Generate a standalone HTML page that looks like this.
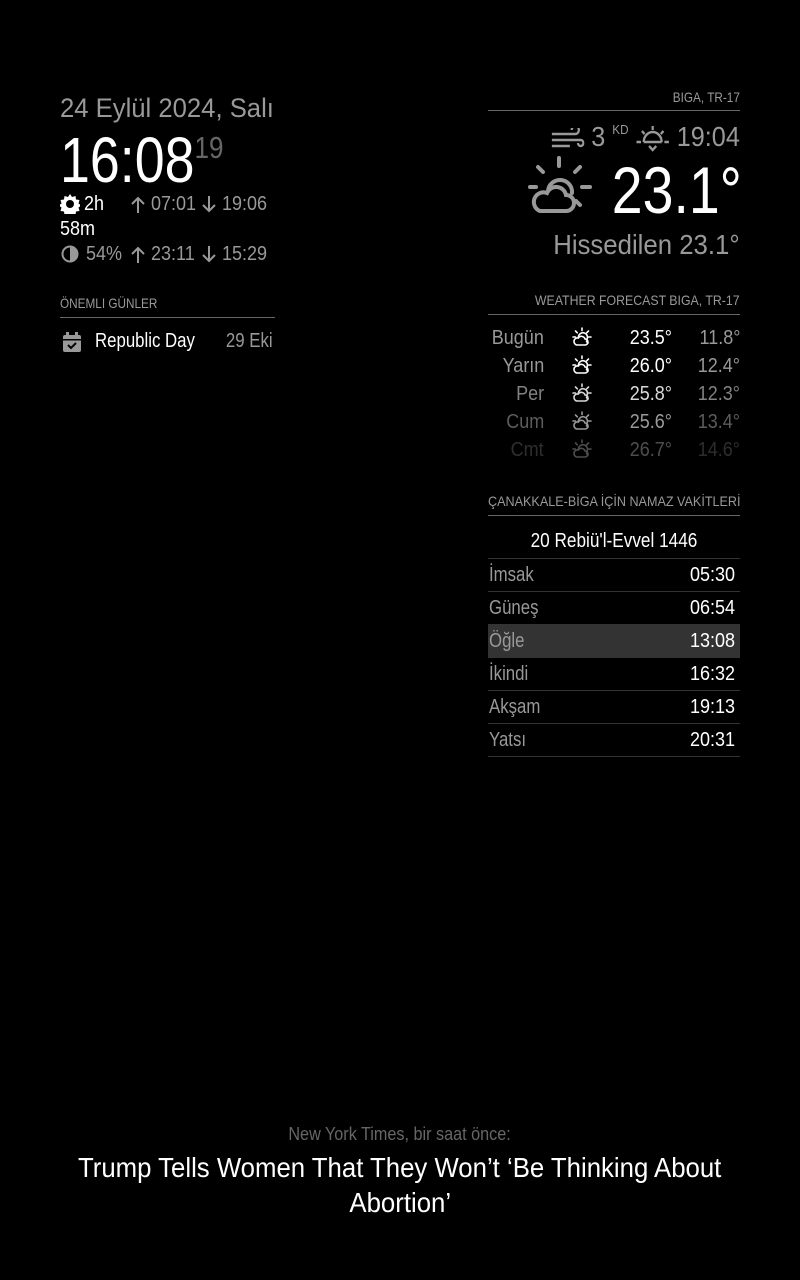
<!DOCTYPE html>
<html><head><meta charset="utf-8"><style>
body{margin:0;width:800px;height:1280px;background:#000;font-family:"Liberation Sans",sans-serif;color:#999;position:relative;overflow:hidden}
.a{position:absolute;white-space:nowrap;line-height:1}
.w{color:#fff}.d{color:#666}
.r{text-align:right}
.hl{position:absolute;height:1px;background:#666}
.cn{display:inline-block;transform:scaleX(.84);transform-origin:left center}
.cr{display:inline-block;transform:scaleX(.84);transform-origin:right center}
.cc{display:inline-block;transform:scaleX(.84);transform-origin:center center}
</style></head><body>
<svg width="0" height="0" style="position:absolute"><defs><g id="sc" stroke-width="1.6" fill="none" stroke-linecap="round"><path d="M10 1v2.5M3.5 4l1.8 1.8M16.5 4l-1.8 1.8M1 10h2.5M16.5 10h2.5M14.5 14.5l1.5 1.5"/><path d="M6.5 11a4.5 4.5 0 1 1 8 2"/><path d="M5 18h8a3 3 0 0 0 0-6 4 4 0 0 0-7-1 3.5 3.5 0 0 0-1 7z"/></g>
<g id="up" stroke="#999" stroke-width="2" fill="none"><path d="M7 18V3M1 9l6-6 6 6"/></g>
<g id="dn" stroke="#999" stroke-width="2" fill="none"><path d="M7 1v15M1 10l6 6 6-6"/></g></defs></svg>
<!-- left -->
<div class="a" style="left:60px;top:95px;font-size:27px"><span class="cn" style="transform:scaleX(.95)">24 Eylül 2024, Salı</span></div>
<div class="a w" style="left:60px;top:128px;font-size:64px;font-weight:300"><span class="cn">16:08<span class="d" style="font-size:31px;vertical-align:top;position:relative;top:4px">19</span></span></div>
<svg class="a" style="left:60px;top:194px" width="20" height="20" viewBox="0 0 20 20"><path d="M10 0l2 3 3.5-1 .5 3.5 3.5.5-1 3.5 3 2-3 2 1 3.5-3.5.5-.5 3.5-3.5-1-2 3-2-3-3.5 1-.5-3.5-3.5-.5 1-3.5-3-2 3-2-1-3.5 3.5-.5.5-3.5 3.5 1z" fill="#fff"/><circle cx="10" cy="10" r="4" fill="#000"/></svg>
<div class="a w" style="left:84px;top:194px;font-size:20px"><span class="cn" style="transform:scaleX(.9)">2h</span></div>
<svg class="a" style="left:131px;top:195px" width="14" height="19"><use href="#up"/></svg>
<div class="a" style="left:151px;top:194px;font-size:20px"><span class="cn" style="transform:scaleX(.9)">07:01</span></div>
<svg class="a" style="left:202px;top:195px" width="14" height="19"><use href="#dn"/></svg>
<div class="a" style="left:222px;top:194px;font-size:20px"><span class="cn" style="transform:scaleX(.9)">19:06</span></div>
<div class="a w" style="left:60px;top:219px;font-size:20px"><span class="cn" style="transform:scaleX(.9)">58m</span></div>
<svg class="a" style="left:61px;top:245px" width="18" height="18" viewBox="0 0 18 18"><circle cx="9" cy="9" r="7.5" fill="none" stroke="#999" stroke-width="2"/><path d="M9 1.5a7.5 7.5 0 0 1 0 15z" fill="#999"/></svg>
<div class="a" style="left:86px;top:244px;font-size:20px"><span class="cn" style="transform:scaleX(.9)">54%</span></div>
<svg class="a" style="left:131px;top:245px" width="14" height="19"><use href="#up"/></svg>
<div class="a" style="left:151px;top:244px;font-size:20px"><span class="cn" style="transform:scaleX(.9)">23:11</span></div>
<svg class="a" style="left:202px;top:245px" width="14" height="19"><use href="#dn"/></svg>
<div class="a" style="left:222px;top:244px;font-size:20px"><span class="cn" style="transform:scaleX(.9)">15:29</span></div>
<div class="a" style="left:60px;top:296px;font-size:14px"><span class="cn">ÖNEMLI GÜNLER</span></div>
<div class="hl" style="left:60px;top:317px;width:215px"></div>
<svg class="a" style="left:63px;top:332px" width="18" height="20" viewBox="0 0 18 20"><rect x="0" y="3" width="18" height="17" rx="2" fill="#999"/><rect x="3" y="0" width="3" height="5" fill="#999"/><rect x="12" y="0" width="3" height="5" fill="#999"/><rect x="0" y="7" width="18" height="1.5" fill="#000"/><path d="M5 13l3 3 5-5" stroke="#000" stroke-width="2" fill="none"/></svg>
<div class="a w" style="left:95px;top:331px;font-size:20px"><span class="cn">Republic Day</span></div>
<div class="a r" style="right:527px;top:331px;font-size:20px"><span class="cr">29 Eki</span></div>
<!-- right weather -->
<div class="a r" style="right:60px;top:90px;font-size:14px"><span class="cr">BIGA, TR-17</span></div>
<div class="hl" style="left:488px;top:110px;width:252px"></div>
<div class="a r" style="right:60px;top:123px;font-size:28px"><span class="cr" style="transform:scaleX(.9)"><svg width="38" height="22" viewBox="0 0 38 22" style="vertical-align:middle"><path d="M2 6h26a4 4 0 1 0-4-4M2 12h32a3 3 0 1 1-3 3M2 18h20" stroke="#999" stroke-width="2.5" fill="none"/></svg> 3 <span style="font-size:13px;vertical-align:top">KD</span> <svg width="38" height="30" viewBox="0 0 38 30" style="vertical-align:middle"><path d="M9 18a10 10 0 0 1 20 0M19 2v4M7 7l3 3M31 7l-3 3M1 18h5M32 18h5M9 18h20M15 22l4 4 4-4" stroke="#999" stroke-width="2.5" fill="none"/></svg> 19:04</span></div>
<svg class="a" style="left:528px;top:155px" width="64" height="60" viewBox="0 0 64 60"><g stroke="#999" stroke-width="4" fill="none" stroke-linecap="round"><path d="M31 3v8M10 12l5 5M52 12l-5 5M2 32h6M54 32h8M48 46l4 4"/><path d="M20 36a12 12 0 1 1 24 2"/><path d="M12 56h26a8 8 0 0 0 0-16 10 10 0 0 0-19-2 9 9 0 0 0-7 18z"/></g></svg>
<div class="a w r" style="right:58px;top:157px;font-size:66px;font-weight:300"><span class="cr">23.1°</span></div>
<div class="a r" style="right:60px;top:231px;font-size:28px"><span class="cr" style="transform:scaleX(.92)">Hissedilen 23.1°</span></div>
<div class="a r" style="right:60px;top:293px;font-size:14px"><span class="cr" style="transform:scaleX(.88)">WEATHER FORECAST BIGA, TR-17</span></div>
<div class="hl" style="left:488px;top:314px;width:252px"></div>
<div style="position:absolute;left:488px;top:324px;width:252px;font-size:20px">
<div style="position:relative;height:28px"><div class="a r" style="right:196px;top:4px"><span class="cr" style="transform:scaleX(.9)">Bugün</span></div><svg class="a" style="left:84px;top:3px;stroke:#fff" width="20" height="20"><use href="#sc"/></svg><div class="a w r" style="right:68px;top:4px"><span class="cr" style="transform:scaleX(.9)">23.5°</span></div><div class="a r" style="right:0;top:4px"><span class="cr" style="transform:scaleX(.9)">11.8°</span></div></div>
<div style="position:relative;height:28px"><div class="a r" style="right:196px;top:4px"><span class="cr" style="transform:scaleX(.9)">Yarın</span></div><svg class="a" style="left:84px;top:3px;stroke:#fff" width="20" height="20"><use href="#sc"/></svg><div class="a w r" style="right:68px;top:4px"><span class="cr" style="transform:scaleX(.9)">26.0°</span></div><div class="a r" style="right:0;top:4px"><span class="cr" style="transform:scaleX(.9)">12.4°</span></div></div>
<div style="position:relative;height:28px;opacity:.85"><div class="a r" style="right:196px;top:4px"><span class="cr" style="transform:scaleX(.9)">Per</span></div><svg class="a" style="left:84px;top:3px;stroke:#fff" width="20" height="20"><use href="#sc"/></svg><div class="a w r" style="right:68px;top:4px"><span class="cr" style="transform:scaleX(.9)">25.8°</span></div><div class="a r" style="right:0;top:4px"><span class="cr" style="transform:scaleX(.9)">12.3°</span></div></div>
<div style="position:relative;height:28px;opacity:.6"><div class="a r" style="right:196px;top:4px"><span class="cr" style="transform:scaleX(.9)">Cum</span></div><svg class="a" style="left:84px;top:3px;stroke:#fff" width="20" height="20"><use href="#sc"/></svg><div class="a w r" style="right:68px;top:4px"><span class="cr" style="transform:scaleX(.9)">25.6°</span></div><div class="a r" style="right:0;top:4px"><span class="cr" style="transform:scaleX(.9)">13.4°</span></div></div>
<div style="position:relative;height:28px;opacity:.3"><div class="a r" style="right:196px;top:4px"><span class="cr" style="transform:scaleX(.9)">Cmt</span></div><svg class="a" style="left:84px;top:3px;stroke:#fff" width="20" height="20"><use href="#sc"/></svg><div class="a w r" style="right:68px;top:4px"><span class="cr" style="transform:scaleX(.9)">26.7°</span></div><div class="a r" style="right:0;top:4px"><span class="cr" style="transform:scaleX(.9)">14.6°</span></div></div>
</div>
<!-- prayer -->
<div class="a" style="left:488px;top:494px;font-size:14px"><span class="cn" style="transform:scaleX(.9)">ÇANAKKALE-BİGA İÇİN NAMAZ VAKİTLERİ</span></div>
<div class="hl" style="left:488px;top:515px;width:252px"></div>
<div class="a w" style="left:488px;width:252px;text-align:center;top:531px;font-size:20px"><span class="cc" style="transform:scaleX(.86)">20 Rebiü'l-Evvel 1446</span></div>
<div style="position:absolute;left:488px;top:558px;width:252px;font-size:20px">
<div style="position:relative;height:32px;border-top:1px solid #333"><div class="a" style="left:1px;top:6px"><span class="cn">İmsak</span></div><div class="a w r" style="right:5px;top:6px"><span class="cr" style="transform:scaleX(.9)">05:30</span></div></div>
<div style="position:relative;height:32px;border-top:1px solid #333"><div class="a" style="left:1px;top:6px"><span class="cn">Güneş</span></div><div class="a w r" style="right:5px;top:6px"><span class="cr" style="transform:scaleX(.9)">06:54</span></div></div>
<div style="position:relative;height:32px;border-top:1px solid #333;background:#333"><div class="a" style="left:1px;top:6px"><span class="cn">Öğle</span></div><div class="a w r" style="right:5px;top:6px"><span class="cr" style="transform:scaleX(.9)">13:08</span></div></div>
<div style="position:relative;height:32px;border-top:1px solid #333"><div class="a" style="left:1px;top:6px"><span class="cn">İkindi</span></div><div class="a w r" style="right:5px;top:6px"><span class="cr" style="transform:scaleX(.9)">16:32</span></div></div>
<div style="position:relative;height:32px;border-top:1px solid #333"><div class="a" style="left:1px;top:6px"><span class="cn">Akşam</span></div><div class="a w r" style="right:5px;top:6px"><span class="cr" style="transform:scaleX(.9)">19:13</span></div></div>
<div style="position:relative;height:32px;border-top:1px solid #333;border-bottom:1px solid #333"><div class="a" style="left:1px;top:6px"><span class="cn">Yatsı</span></div><div class="a w r" style="right:5px;top:6px"><span class="cr" style="transform:scaleX(.9)">20:31</span></div></div>
</div>
<!-- news -->
<div class="a d" style="left:0;width:800px;text-align:center;top:1125px;font-size:18px;font-weight:300"><span class="cc" style="transform:scaleX(.9)">New York Times, bir saat önce:</span></div>
<div class="a w" style="left:0;width:800px;text-align:center;top:1150px;font-size:28px;line-height:35px;font-weight:300"><span class="cc" style="transform:scaleX(.92)">Trump Tells Women That They Won’t ‘Be Thinking About</span><br><span class="cc" style="transform:scaleX(.92)">Abortion’</span></div>
</body></html>
